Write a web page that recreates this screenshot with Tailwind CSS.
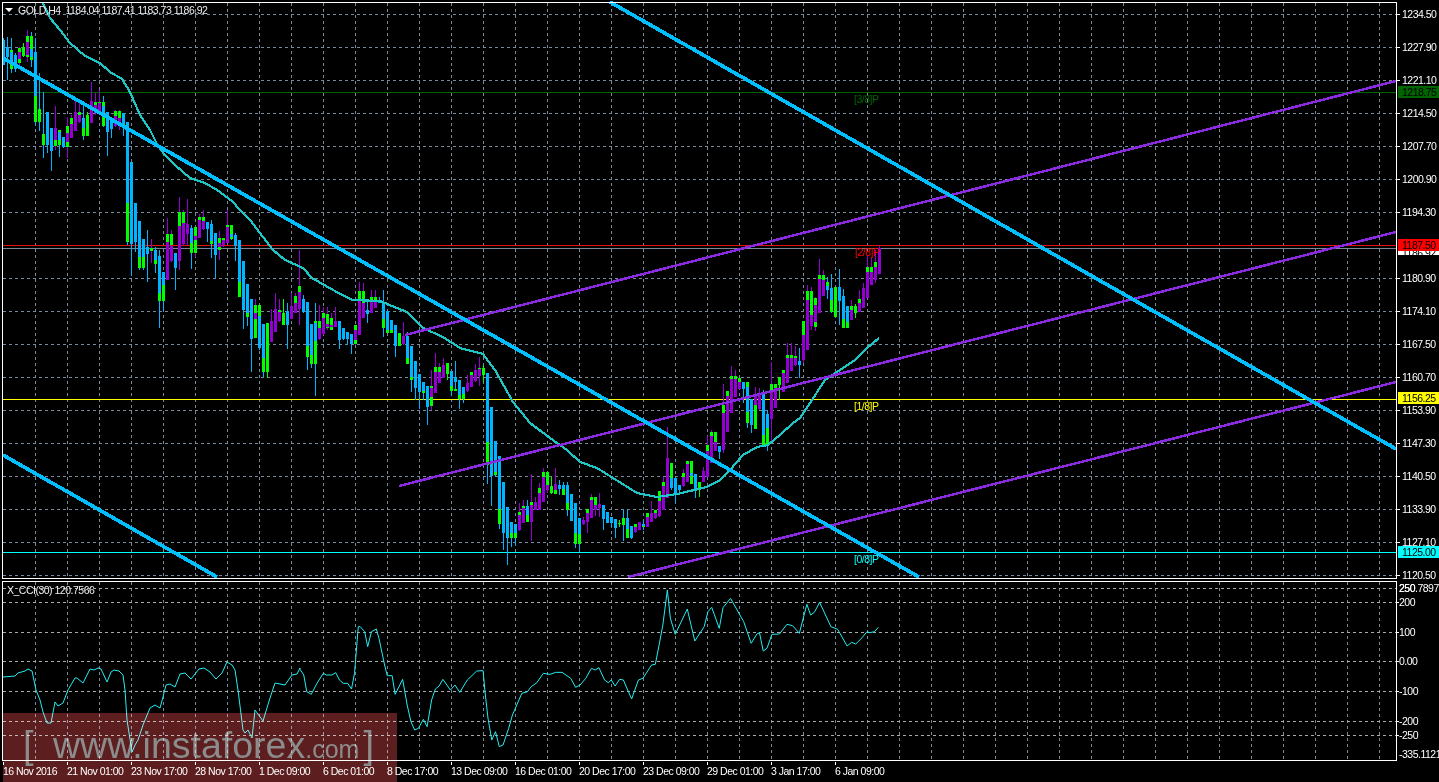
<!DOCTYPE html>
<html lang="en">
<head>
<meta charset="UTF-8">
<title>GOLD,H4</title>
<script src="https://cdn.jsdelivr.net/npm/@tailwindcss/browser@4"></script>
</head>
<body class="bg-black overflow-hidden">
<div class="relative w-[1439px] h-[782px] bg-black overflow-hidden flex flex-col font-['Liberation_Sans',sans-serif] text-[10.5px] tracking-[-0.5px]">
  <!-- price pane -->
  <svg id="main" class="block shrink-0" width="1439" height="580" viewBox="0 0 1439 580"></svg>
  <!-- X_CCI pane -->
  <svg id="sub" class="block shrink-0" width="1439" height="182" viewBox="0 580 1439 182"></svg>
  <!-- time axis -->
  <svg id="time" class="block shrink-0" width="1439" height="20" viewBox="0 762 1439 20"></svg>

  <!-- watermark -->
  <div class="absolute left-[3px] top-[713px] w-[394px] h-[69px] bg-[#5c1e1e] mix-blend-screen pt-[4px] pl-[20px] flex items-baseline text-[#8c8c8c] tracking-normal whitespace-nowrap leading-[56px]">
    <span class="text-[38px] font-light w-[30px]">[</span>
    <span class="text-[37.5px]">www.instaforex</span>
    <span class="text-[25px]">.com</span>
    <span class="text-[38px] font-light ml-[4px]">]</span>
  </div>
</div>

<script>
// each candle: wick top, wick bottom, p(urple)/b(lue)/- body, body top, body bottom, green top, green bottom
const candles = `38 65 b 40 65|37 80 b 47 57|38 73 b 52 63 50 69|53 72 b 55 69|47 65 p 52 59 48 63|43 57 - 0 0 47 56|30 62 p 42 55 36 57|32 67 b 49 57 36 60
38 125 b 52 96 96 122|73 131 b 73 109 109 122|92 158 b 91 134 134 145|112 153 b 112 145|128 171 b 128 151|106 150 p 128 140 140 146|130 157 b 132 140 130 145|137 148 b 137 147
117 158 p 133 142 126 147|115 138 p 124 138 118 138|100 131 p 112 131|103 123 p 115 122 112 122|105 140 b 118 128 128 136|112 136 - 0 0 115 136|82 123 p 101 123|93 115 p 105 113 102 108
90 110 p 103 112 102 105|96 127 b 106 117 102 126|112 156 b 112 132|118 138 b 119 129|110 127 p 116 126 111 116|110 130 p 118 125 111 118|113 136 b 113 124 113 127|122 245 b 122 203 203 242
162 276 b 162 244|203 252 b 203 242|221 270 b 221 257 257 268|239 270 b 239 257 257 268|230 282 b 247 254|239 263 p 0 0 248 251|247 273 b 250 260 260 264|250 328 b 256 293 293 301
272 311 b 272 285 285 301|218 280 p 242 280 234 247|230 262 p 246 261 234 245|253 290 b 253 268|197 270 p 226 261 212 226|210 245 p 223 244 212 224|199 245 p 224 234|225 269 b 228 243 243 253
227 257 p 236 240 227 253|214 238 p 220 238 217 221|210 230 p 221 229 217 221|222 242 b 222 229 222 225|220 258 b 224 241 241 244|233 278 b 233 255|231 260 p 243 247 238 250|238 247 p 240 245 238 243
210 243 p 227 243 225 230|225 240 b 234 237 225 239|233 261 b 235 246|240 297 b 240 282 282 297|261 329 b 261 310|284 326 b 284 313 313 317|299 372 b 299 339|299 338 p 313 319 305 338
305 350 b 316 348 305 316|324 377 b 324 358 358 372|323 378 - 0 0 323 372|309 342 p 321 342|293 332 p 309 332|299 322 p 312 321 310 312|299 325 - 0 0 313 325|303 349 b 311 325 320 325
293 319 p 306 319|293 313 p 303 313 296 303|250 325 p 292 309 286 292|295 313 b 299 312|302 370 b 302 346 346 357|324 368 b 324 355 355 364|303 396 b 323 341 321 364|305 340 p 328 339 321 328
307 335 p 318 334 313 325|307 330 p 324 327 314 328|313 330 p 325 327 318 330|307 327 p 321 327 325 327|321 349 b 321 340 334 340|328 340 b 328 339|332 345 b 332 339|334 354 b 334 344
325 345 p 330 340 325 344|282 335 p 300 335 291 300|283 318 p 303 318 291 303|300 323 b 310 314|290 313 p 302 313 297 302|290 308 p 300 308 297 300|297 303 b 302 303 300 302|290 337 b 302 319 319 328
311 333 b 311 330 330 333|320 333 b 320 330 330 333|325 357 b 325 346|333 346 - 0 0 333 346|322 345 p 336 344|332 364 b 336 358 358 364|346 392 b 346 377 377 380|361 400 b 361 388
374 409 b 374 392|382 400 b 382 391 391 393|386 425 b 386 407|370 410 p 388 397 386 406|353 393 p 372 393 367 393|363 383 p 372 383 367 372|358 378 p 365 378|363 380 - 0 0 363 374
371 396 b 371 386 386 391|361 391 b 377 382 389 391|380 409 b 380 395 395 399|387 403 b 387 394 394 399|375 392 p 383 391|372 387 p 375 387 372 375|364 382 p 370 381|357 386 p 369 376 368 370
365 382 - 0 0 368 375|373 484 b 373 442 442 465|407 506 b 407 476|441 477 b 441 472 472 475|456 529 b 456 509 509 524|482 550 b 482 533|507 565 b 507 538|522 547 b 522 533 533 538
524 546 b 524 533 533 538|503 531 p 515 530 512 515|500 523 p 508 523 506 508|500 522 b 506 515 506 522|474 541 p 505 522 502 505|497 510 p 502 510 502 510|483 510 p 493 510 488 493|468 502 p 477 502 472 477
472 493 p 485 490 472 485|477 494 - 0 0 486 493|468 494 p 484 490 490 494|480 495 b 485 489|482 495 b 485 489 489 495|482 516 b 485 503 503 510|494 521 b 494 521|503 548 b 503 533 533 544
518 551 b 518 534 534 544|517 525 p 520 524|509 533 p 513 522 509 513|494 518 p 500 518 497 500|497 516 p 505 510 497 505|493 517 p 504 508|505 530 b 505 519|512 523 b 512 523
517 527 b 517 523|519 538 b 519 528|520 527 - 0 0 523 524|510 541 b 0 0 518 525|509 538 b 518 529 529 538|526 539 b 526 538|524 533 p 527 532 524 532|522 530 p 522 530
520 530 b 524 526 524 527|513 527 p 517 527 513 517|501 522 p 513 522|510 519 p 513 518 510 518|491 517 p 501 516 491 501|477 510 p 486 510 482 486|427 498 p 458 498|463 490 b 478 488 463 488
478 503 b 478 493|485 492 b 485 490 485 490|469 487 p 477 486 473 477|461 482 p 464 482 461 464|461 484 b 473 476 461 484|474 498 b 474 490|482 497 - 0 0 482 489|467 482 p 471 482
436 477 p 451 477 445 451|430 463 p 436 463 432 436|432 451 p 442 451 432 442|446 459 b 446 452|384 453 p 413 450 405 413|391 432 p 396 432 391 396|366 413 p 379 413 376 379|370 397 p 379 397 376 379
378 389 p 382 389 378 382|382 403 b 382 389|382 428 b 387 412 382 423|399 433 b 399 425|387 429 p 396 405 396 429|388 410 p 393 409|390 447 b 393 435 435 446|410 451 b 414 428 419 446
362 442 p 391 419 384 391|384 408 p 388 408 384 388|377 400 - 0 0 377 385|370 392 p 373 392 370 373|343 383 p 358 383 355 358|343 371 p 358 371 355 358|346 366 p 358 365 356 358|348 378 b 361 365
321 363 p 335 360 321 335|285 350 p 300 350 291 300|287 330 p 315 326 291 320|297 331 p 305 322 298 327|259 313 p 279 313 275 279|270 296 p 280 296 275 280|277 299 b 286 290 282 290|274 313 b 288 300 288 312
287 317 - 0 0 287 317|269 325 b 287 301 287 301|289 328 b 296 319 319 328|306 328 b 306 322 322 328|300 320 p 310 320 306 313|304 318 - 0 0 306 313|290 312 p 303 312 299 303|283 308 p 288 308
255 298 p 272 298 267 272|258 285 p 272 285 267 272|250 283 p 267 280 262 267|246 274 p 248 274`.split(/[|\n]/);

const ma = [[43,3],[50,18],[60,30],[70,43],[85,56],[100,63],[110,72],[122,79],[130,92],[140,115],[150,130],[158,146],[165,155],[175,165],[190,178],[205,183],[217,190],[232,201],[240,210],[250,220],[273,250],[285,260],[303,268],[312,278],[333,290],[352,300],[380,301],[397,308],[407,312],[423,328],[443,337],[460,348],[483,354],[495,370],[513,402],[530,423],[550,438],[567,450],[580,462],[597,468],[613,478],[637,493],[657,497],[677,494],[707,487],[720,480],[730,470],[743,455],[757,447],[768,445],[780,435],[793,423],[800,418],[810,403],[825,380],[840,370],[855,360],[867,348],[879,338]];

// x_cci, left part in page coordinates
const cciLeft = [[3,677],[15,676],[18,673],[25,671],[28,669],[32,671],[36,690],[40,700],[43,712],[47,723],[51,723],[55,702],[58,706],[63,703],[68,690],[75,678],[77,678],[83,683],[87,675],[90,669],[94,670],[98,668],[101,669],[107,682],[111,672],[114,670],[119,671],[123,675],[125,690],[127,720],[132,752],[135,745],[138,740],[143,725],[150,708],[155,705],[160,708],[163,697],[166,685],[170,684],[175,687],[180,674],[185,673],[191,679],[199,669],[204,668],[210,672],[216,679],[222,673],[227,662],[232,665],[235,670],[238,690],[243,730],[245,733],[248,730],[252,738],[255,710],[263,721],[270,698],[275,683],[285,685],[292,675],[297,674],[300,668]];
// right part read off a crop: crop x, crop y
const cciRight = [[0,253],[10,270],[18,320],[30,328],[45,295],[62,265],[70,270],[85,270],[95,263],[105,285],[115,295],[127,295],[137,312],[145,265],[155,125],[160,125],[172,140],[180,185],[190,140],[203,132],[210,160],[225,240],[232,272],[245,272],[253,328],[273,283],[285,360],[295,410],[305,435],[315,430],[328,403],[338,425],[350,345],[360,312],[370,303],[380,283],[400,315],[412,300],[425,322],[445,285],[470,258],[487,257],[492,320],[500,400],[510,465],[520,440],[530,485],[540,480],[555,430],[565,390],[590,325],[605,320],[615,305],[630,293],[647,265],[665,268],[680,262],[697,262],[720,280],[733,307],[745,300],[760,280],[775,250],[785,255],[795,248],[810,285],[820,293],[828,285],[838,303],[850,283],[860,285],[882,342],[900,285],[912,280],[935,240],[945,238],[955,180],[965,120],[977,15],[985,100],[998,148],[1030,72],[1050,168],[1075,125],[1085,80],[1095,67],[1115,130],[1125,68],[1145,40],[1180,110],[1200,175],[1215,147],[1222,143],[1232,198],[1242,190],[1255,148],[1275,147],[1295,118],[1310,122],[1328,145],[1348,58],[1358,90],[1368,82],[1382,52],[1412,125],[1430,133],[1455,183],[1467,172],[1478,177],[1495,158],[1508,140],[1515,143],[1528,140],[1538,127]];
const cci = cciLeft.concat(cciRight.map(([x, y]) => [300 + x * 0.376, 585 + y / 3]));

const prices = ['1234.50','1227.90','1221.10','1214.50','1207.70','1200.90','1194.30','','1180.90','1174.10','1167.50','1160.70','1153.90','1147.30','1140.50','1133.90','1127.10','1120.50'];
const levels = [['200',602],['100',632],['0.00',661],['-100',691],['-200',721],['-250',735]];
const times = ['16 Nov 2016','21 Nov 01:00','23 Nov 17:00','28 Nov 17:00','1 Dec 09:00','6 Dec 01:00','8 Dec 17:00','13 Dec 09:00','16 Dec 01:00','20 Dec 17:00','23 Dec 09:00','29 Dec 01:00','3 Jan 17:00','6 Jan 09:00'];

const rect = (x, y, w, h, c) => `<rect x="${x}" y="${y}" width="${w}" height="${h}" fill="${c}"/>`;
const text = (x, y, s, c = '#fff') => `<text x="${x}" y="${y}" fill="${c}">${s}</text>`;
const hline = (y, c) => rect(3, y, 1393, 1, c);
const seg = (x1, y1, x2, y2, c, w) => `<line x1="${x1}" y1="${y1}" x2="${x2}" y2="${y2}" stroke="${c}" stroke-width="${w}"/>`;
const poly = (pts, c, w) => `<polyline points="${pts.join(' ')}" fill="none" stroke="${c}" stroke-width="${w}"/>`;
const vgrid = (y1, y2) => {
  let s = '';
  for (let x = 35; x < 1396; x += 32) s += `<line x1="${x + .5}" y1="${y1}" x2="${x + .5}" y2="${y2}" stroke="#778899" stroke-dasharray="3 3"/>`;
  return s;
};
const hgrid = (y, c) => `<line x1="3" y1="${y + .5}" x2="1396" y2="${y + .5}" stroke="${c}" stroke-dasharray="3 3"/>`;
const tag = (y, c, s) => rect(1398, y - 6, 41, 12, c) + text(1402, y + 4, s, '#000');

// price pane
let m = '<g shape-rendering="crispEdges">' + vgrid(3, 577);
prices.forEach((p, i) => { m += hgrid(14 + 33 * i, '#778899'); });
m += hline(92, '#006400') + hline(245, '#e01010') + hline(248, '#778899') + hline(399, '#ffff00') + hline(552, '#00ffff');
candles.forEach((c, i) => {
  const [wt, wb, col, t, b, gt, gb] = c.split(' ');
  const x = 3 + 4 * i, fill = col === 'p' ? '#9400d3' : '#00b4ff', left = Math.max(x - 1, 3);
  if (col === '-') m += rect(x, wt, 1, wb - wt, '#00ff00');
  else m += rect(x, wt, 1, wb - wt, fill);
  if (gt) m += rect(left, gt, x + 2 - left, gb - gt, '#00ff00');
  if (col !== '-' && b > t) m += rect(left, t, x + 2 - left, b - t, fill);
});
m += poly(ma, '#1fc6c6', 2.2);
m += seg(405, 335, 1396, 81, '#8a2be2', 2.5) + seg(399, 486, 1396, 232, '#8a2be2', 2.5) + seg(628, 577, 1396, 382, '#8a2be2', 2.5);
m += seg(3, 58, 919, 577, '#00bfff', 3.7) + seg(610, 2, 1396, 449, '#00bfff', 3.7) + seg(3, 455, 217, 577, '#00bfff', 3.7);
m += rect(2, 2, 1395, 1, '#fff') + rect(2, 2, 1, 577, '#fff') + rect(1396, 2, 1, 577, '#fff') + rect(2, 578, 1395, 1, '#fff');
prices.forEach((p, i) => {
  const y = 14 + 33 * i;
  if (p) m += rect(1397, y, 3, 1, '#fff') + text(1402, y + 4, p);
});
m += rect(1398, 250, 41, 5, '#fff') + text(1402, 257, '1186.92', '#000');
m += tag(92, '#006400', '1218.75') + tag(245, '#ff0000', '1187.50') + tag(398, '#ffff00', '1156.25') + tag(552, '#00ffff', '1125.00');
m += '</g>';
m += '<polygon points="5,8 13,8 9,12" fill="#fff"/>';
m += `<text x="18" y="14" fill="#eee" xml:space="preserve">GOLD,H4  1184.04 1187.41 1183.73 1186.92</text>`;
m += text(854, 103, '[3/8]P', '#006400') + text(855, 256, '[2/8]P', '#ff0000') + text(854, 410, '[1/8]P', '#ffff00') + text(854, 563, '[0/8]P', '#00ffff');
document.getElementById('main').innerHTML = m;

// x_cci pane
let s = '<g shape-rendering="crispEdges">' + vgrid(582, 760) + hgrid(588, '#aaaaaa');
levels.forEach(([, y]) => { s += hgrid(y, '#aaaaaa'); });
s += '</g>' + poly(cci, '#22eef2', 1) + '<g shape-rendering="crispEdges">';
s += rect(2, 581, 1395, 1, '#fff') + rect(2, 581, 1, 180, '#fff') + rect(1396, 581, 1, 180, '#fff') + rect(2, 760, 1395, 1, '#fff') + '</g>';
levels.forEach(([l, y]) => { s += rect(1397, y, 2, 1, '#fff') + text(1399, y + 4, l); });
s += text(1399, 592, '250') + text(1399, 592, '250.7897') + text(1399, 758, '-335.1121');
s += text(7, 594, 'X_CCI(30) 120.7566', '#eee');
document.getElementById('sub').innerHTML = s;

// time axis
let t = '';
times.forEach((l, i) => {
  const x = 3 + 64 * i;
  t += rect(x, 762, 1, 3, '#fff') + text(x, 775, l);
});
document.getElementById('time').innerHTML = t;
</script>
</body>
</html>
